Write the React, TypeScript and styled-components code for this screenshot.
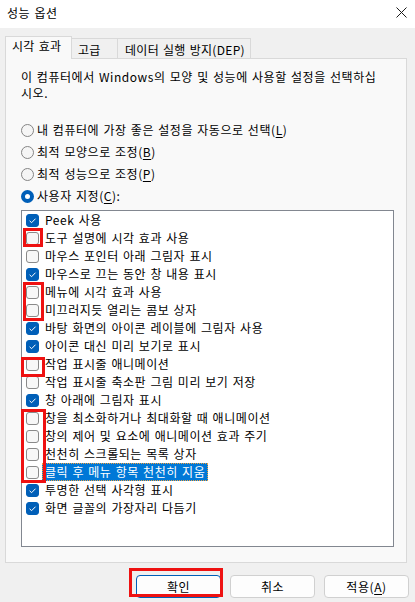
import React from 'react';
import styled, { createGlobalStyle, css } from 'styled-components';

type Effect = { label: string; on: boolean; selected?: boolean };
type Mark = { top: number; bottom: number; left: number; width: number };
type Group = { items: Effect[]; mark?: Mark };

const groups: Group[] = [
  { items: [{ label: 'Peek 사용', on: true }] },
  {
    items: [{ label: '도구 설명에 시각 효과 사용', on: false }],
    mark: { top: -1, bottom: 0, left: 1, width: 20 },
  },
  {
    items: [
      { label: '마우스 포인터 아래 그림자 표시', on: false },
      { label: '마우스로 끄는 동안 창 내용 표시', on: true },
    ],
  },
  {
    items: [
      { label: '메뉴에 시각 효과 사용', on: false },
      { label: '미끄러지듯 열리는 콤보 상자', on: false },
    ],
    mark: { top: -1, bottom: -2, left: 1, width: 21 },
  },
  {
    items: [
      { label: '바탕 화면의 아이콘 레이블에 그림자 사용', on: true },
      { label: '아이콘 대신 미리 보기로 표시', on: true },
    ],
  },
  {
    items: [{ label: '작업 표시줄 애니메이션', on: false }],
    mark: { top: 2, bottom: -4, left: -1, width: 24 },
  },
  {
    items: [
      { label: '작업 표시줄 축소판 그림 미리 보기 저장', on: false },
      { label: '창 아래에 그림자 표시', on: true },
    ],
  },
  {
    items: [
      { label: '창을 최소화하거나 최대화할 때 애니메이션', on: false },
      { label: '창의 제어 및 요소에 애니메이션 효과 주기', on: false },
      { label: '천천히 스크롤되는 목록 상자', on: false },
      { label: '클릭 후 메뉴 항목 천천히 지움', on: false, selected: true },
    ],
    mark: { top: 0, bottom: -2, left: -1, width: 25 },
  },
  {
    items: [
      { label: '투명한 선택 사각형 표시', on: true },
      { label: '화면 글꼴의 가장자리 다듬기', on: true },
    ],
  },
];

const GlobalStyle = createGlobalStyle`
  html, body {
    margin: 0;
    padding: 0;
  }
  body {
    font-family: 'Noto Sans CJK KR', 'Noto Sans', sans-serif;
    font-size: 12px;
    letter-spacing: 0.55px;
    word-spacing: 1px;
    color: #000;
    background: #f0f0f0;
  }
`;

function App() {
  return (
    <Window>
      <GlobalStyle />
      <TitleBar>
        <Title>성능 옵션</Title>
        <svg width="11" height="11" viewBox="0 0 11 11">
          <path d="M0.5 0.5 L10.5 10.5 M10.5 0.5 L0.5 10.5" stroke="#1a1a1a" strokeWidth="1" />
        </svg>
      </TitleBar>

      <Body>
        <TabStrip>
          <Tab $active $w={67}>시각 효과</Tab>
          <Tab $w={46}>고급</Tab>
          <Tab $w={133} $pad={7}>데이터 실행 방지(DEP)</Tab>
        </TabStrip>

        <Panel>
          <Description>
            이 컴퓨터에서 Windows의 모양 및 성능에 사용할 설정을 선택하십
            <br />
            시오.
          </Description>

          <Radios>
            <RadioRow>
              <RadioDot />
              <span>
                내 컴퓨터에 가장 좋은 설정을 자동으로 선택(<u>L</u>)
              </span>
            </RadioRow>
            <RadioRow>
              <RadioDot />
              <span>
                최적 모양으로 조정(<u>B</u>)
              </span>
            </RadioRow>
            <RadioRow>
              <RadioDot />
              <span>
                최적 성능으로 조정(<u>P</u>)
              </span>
            </RadioRow>
            <RadioRow>
              <RadioDot $on />
              <span>
                사용자 지정(<u>C</u>):
              </span>
            </RadioRow>
          </Radios>

          <ListBox>
            {groups.map((g, gi) => (
              <RowGroup key={gi} $mark={g.mark}>
                {g.items.map(item => (
                  <Row key={item.label}>
                    <CheckBox $on={item.on}>
                      {item.on && (
                        <svg width="11" height="11" viewBox="0 0 11 11">
                          <path
                            d="M2.6 5.8 L4.6 7.7 L8.5 3.7"
                            fill="none"
                            stroke="#fff"
                            strokeWidth="1"
                          />
                        </svg>
                      )}
                    </CheckBox>
                    <Label $selected={item.selected}>{item.label}</Label>
                  </Row>
                ))}
              </RowGroup>
            ))}
          </ListBox>
        </Panel>

        <ButtonRow>
          <Button $primary $marked>
            확인
          </Button>
          <Button>취소</Button>
          <Button>
            적용(<u>A</u>)
          </Button>
        </ButtonRow>
      </Body>
    </Window>
  );
}

const Window = styled.div`
  width: 415px;
  height: 602px;
  background: #f0f0f0;
  display: flex;
  flex-direction: column;
  overflow: hidden;
`;

const TitleBar = styled.div`
  height: 28px;
  box-sizing: border-box;
  background: #fff;
  display: flex;
  align-items: center;
  justify-content: space-between;
  padding: 0 8px 3px 7px;
`;

const Title = styled.div`
  font-size: 12px;
  line-height: 16px;
`;

const Body = styled.div`
  display: flex;
  flex-direction: column;
  padding: 8px 8px 0 5px;
`;

const TabStrip = styled.div`
  display: flex;
  align-items: flex-end;
  height: 22px;
`;

const Tab = styled.div<{ $active?: boolean; $w: number; $pad?: number }>`
  box-sizing: border-box;
  width: ${p => p.$w}px;
  height: ${p => (p.$active ? 23 : 20)}px;
  margin-bottom: ${p => (p.$active ? -1 : 0)}px;
  padding: ${p => (p.$active ? 1 : 3)}px 0 0 ${p => p.$pad ?? 6}px;
  line-height: 16px;
  letter-spacing: 0.3px;
  white-space: nowrap;
  border: 1px solid #d9d9d9;
  border-bottom: none;
  ${p =>
    p.$active
      ? css`
          background: #f9f9f9;
          position: relative;
          z-index: 1;
        `
      : css`
          background: #f0f0f0;
          border-left: none;
        `}
`;

const Panel = styled.div`
  box-sizing: border-box;
  height: 505px;
  background: #f9f9f9;
  border: 1px solid #d9d9d9;
  padding: 10px 12px 0 15px;
`;

const Description = styled.p`
  margin: 0;
  line-height: 16px;
  white-space: nowrap;
`;

const Radios = styled.div`
  margin-top: 18px;
  display: flex;
  flex-direction: column;
`;

const RadioRow = styled.div`
  height: 22px;
  display: flex;
  align-items: center;
  gap: 3px;
  line-height: 16px;
  u {
    text-underline-offset: 2px;
  }
`;

const RadioDot = styled.span<{ $on?: boolean }>`
  box-sizing: border-box;
  width: 13px;
  height: 13px;
  border-radius: 50%;
  flex-shrink: 0;
  ${p =>
    p.$on
      ? css`
          background: #fff;
          border: 4px solid #005fb8;
        `
      : css`
          background: #f5f5f5;
          border: 1px solid #858585;
        `}
`;

const ListBox = styled.div`
  box-sizing: border-box;
  margin-top: 3px;
  height: 337px;
  background: #fff;
  border: 1px solid #828790;
`;

const RowGroup = styled.div<{ $mark?: Mark }>`
  position: relative;
  ${p =>
    p.$mark &&
    css`
      &::before {
        content: '';
        position: absolute;
        top: ${p.$mark.top}px;
        bottom: ${p.$mark.bottom}px;
        left: ${p.$mark.left}px;
        width: ${p.$mark.width}px;
        box-sizing: border-box;
        border: 3px solid #ee1111;
        z-index: 2;
      }
    `}
`;

const Row = styled.div`
  height: 18px;
  display: flex;
  align-items: center;
  padding-left: 4px;
`;

const CheckBox = styled.span<{ $on: boolean }>`
  box-sizing: border-box;
  width: 13px;
  height: 13px;
  border-radius: 3px;
  margin-right: 3px;
  flex-shrink: 0;
  display: flex;
  align-items: center;
  justify-content: center;
  ${p =>
    p.$on
      ? css`
          background: #005fb8;
          border: 1px solid #005fb8;
        `
      : css`
          background: #f7f7f7;
          border: 1px solid #8a8a8a;
        `}
`;

const Label = styled.span<{ $selected?: boolean }>`
  box-sizing: border-box;
  height: 18px;
  display: flex;
  align-items: center;
  padding: 0 3px;
  white-space: nowrap;
  line-height: 16px;
  ${p =>
    p.$selected &&
    css`
      background: #0078d7;
      color: #fff;
      border: 1px dotted #f0a040;
      padding: 0 2px;
    `}
`;

const ButtonRow = styled.div`
  display: flex;
  justify-content: flex-end;
  gap: 9px;
  padding-top: 12px;
  margin-right: -2px;
`;

const Button = styled.div<{ $primary?: boolean; $marked?: boolean }>`
  position: relative;
  box-sizing: border-box;
  width: 85px;
  height: 23px;
  display: flex;
  align-items: center;
  justify-content: center;
  background: #fdfdfd;
  border: 1px solid ${p => (p.$primary ? '#005fb8' : '#d0d0d0')};
  border-radius: 4px;
  line-height: 16px;
  u {
    text-underline-offset: 2px;
  }
  ${p =>
    p.$marked &&
    css`
      &::after {
        content: '';
        position: absolute;
        top: -8px;
        left: -8px;
        right: -3px;
        bottom: 0;
        border: 3px solid #ee1111;
      }
    `}
`;

export default App;
